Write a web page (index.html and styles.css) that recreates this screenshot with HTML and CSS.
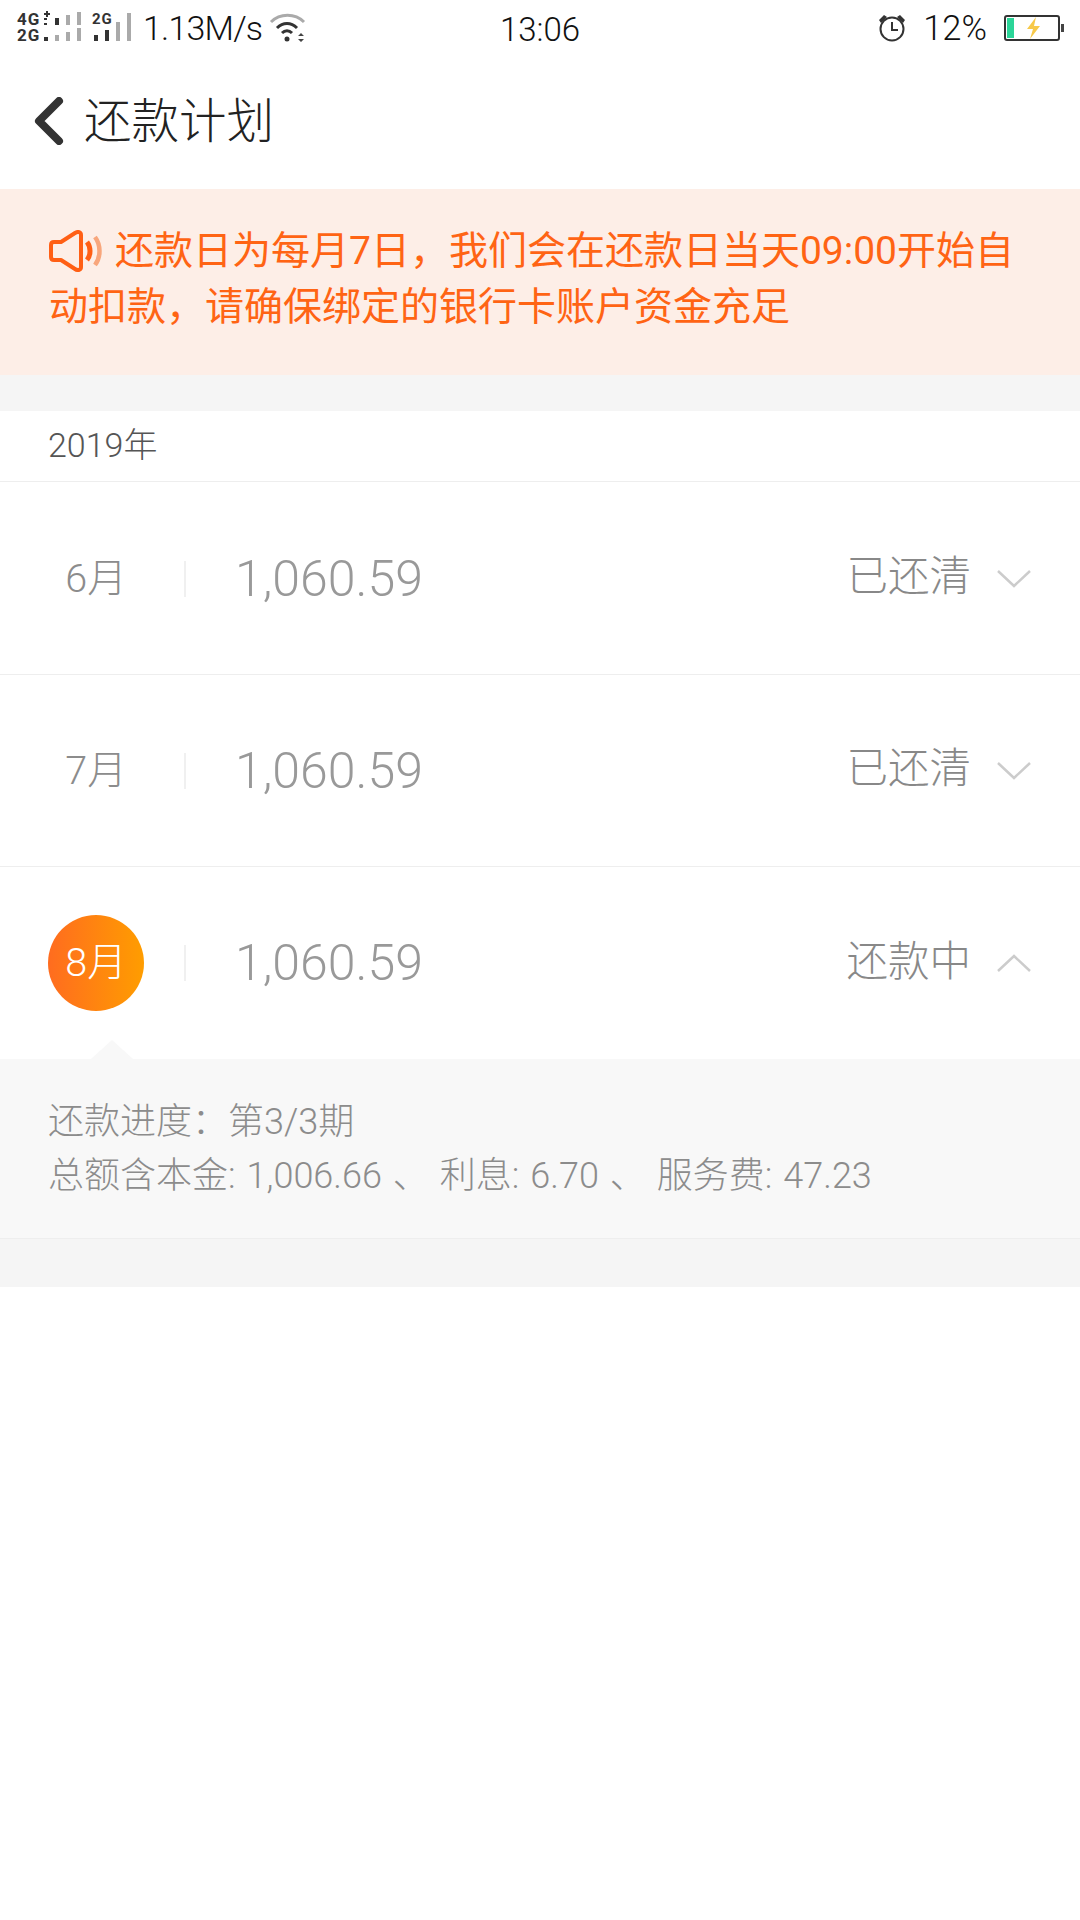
FILE: index.html
```html
<!DOCTYPE html>
<html lang="zh-CN">
<head>
    <meta charset="UTF-8">
    <meta name="viewport" content="width=device-width, initial-scale=1.0">
    <title>还款计划</title>
    <link rel="stylesheet" href="styles.css">
</head>
<body>
    <!-- 状态栏 -->
    <div class="status-bar">
        <div class="status-left">
            <svg width="135" height="56" viewBox="0 0 135 56">
                <text x="17" y="25" class="net-label">4G</text>
                <text x="17" y="41" class="net-label">2G</text>
                <path d="M44 14h6M47 11v6" stroke="#333" stroke-width="2"/>
                <path d="M44 18h3v2h-3zM44 23h3v2h-3z" fill="#333"/>
                <rect x="44" y="37" width="4" height="4" fill="#333"/>
                <rect x="55" y="18" width="4" height="7" fill="#333"/>
                <rect x="55" y="35" width="4" height="6" fill="#aaa"/>
                <rect x="66" y="15" width="4" height="10" fill="#aaa"/>
                <rect x="66" y="32" width="4" height="9" fill="#aaa"/>
                <rect x="77" y="12" width="4" height="13" fill="#aaa"/>
                <rect x="77" y="28" width="4" height="13" fill="#aaa"/>
                <text x="92" y="24" class="net-label-small">2G</text>
                <rect x="94" y="35" width="4" height="6" fill="#333"/>
                <rect x="105" y="30" width="4" height="11" fill="#333"/>
                <rect x="116" y="22" width="4" height="19" fill="#aaa"/>
                <rect x="127" y="13" width="4" height="28" fill="#aaa"/>
            </svg>
            <span class="speed">1.13M/s</span>
            <svg class="wifi" width="38" height="30" viewBox="0 0 38 30" fill="none">
                <path d="M2 9C11 0 26 0 35 9" stroke="#aaa" stroke-width="3"/>
                <path d="M8 15C14 9 22 9 28 15" stroke="#333" stroke-width="3"/>
                <path d="M13 20C16 17 20 17 23 20" stroke="#333" stroke-width="3"/>
                <circle cx="18" cy="26" r="2.500" fill="#333"/>
                <path d="M29 23l3-3 3 3zM29 26l3 3 3-3z" fill="#444"/>
            </svg>
        </div>
        <div class="status-time">13:06</div>
        <div class="status-right">
            <svg width="28" height="28" viewBox="0 0 28 28" fill="none">
                <circle cx="14" cy="15" r="11.500" stroke="#333" stroke-width="2"/>
                <path d="M14 8v8h6" stroke="#333" stroke-width="2"/>
                <path d="M1 6l5-5 3 2-6 6zM27 6l-5-5-3 2 6 6z" fill="#333"/>
            </svg>
            <span class="battery-text">12%</span>
            <svg width="60" height="26" viewBox="0 0 60 26" fill="none">
                <rect x="1" y="1" width="54" height="24" rx="2" stroke="#333" stroke-width="2"/>
                <rect x="3" y="3" width="7" height="20" fill="#2bd598"/>
                <rect x="57" y="9" width="3" height="8" fill="#444"/>
                <path d="M32 2l-9 12h6l-3 10 10-13h-6z" fill="#f7c94a"/>
            </svg>
        </div>
    </div>

    <!-- 标题栏 -->
    <div class="header">
        <svg width="32" height="48" viewBox="0 0 32 48" fill="none">
            <path d="M27 4L7 24l20 20" stroke="#333" stroke-width="8" stroke-linecap="round" stroke-linejoin="round"/>
        </svg>
        <div class="header-title">还款计划</div>
    </div>

    <!-- 提示 -->
    <div class="notice">
        <svg class="notice-icon" width="54" height="42" viewBox="0 0 54 42" fill="none">
            <path d="M2 15c0-2 1-3 3-3h7L26 3c3-2 6-1 6 2v32c0 3-3 4-6 2L12 30H5c-2 0-3-1-3-3z" stroke="#ff5f15" stroke-width="4" stroke-linejoin="round"/>
            <path d="M38 12c4 5 4 13 0 18" stroke="#ff5f15" stroke-width="5"/>
            <path d="M46 7c6 8 6 20 0 28" stroke="#f8a67c" stroke-width="4.500"/>
        </svg>还款日为每月7日，我们会在还款日当天09:00开始自动扣款，请确保绑定的银行卡账户资金充足
    </div>

    <div class="gap"></div>

    <div class="year-row">2019年</div>

    <!-- 每月计划 -->
    <div class="plan-row">
        <div class="plan-month">6月</div>
        <div class="plan-line"></div>
        <div class="plan-amount">1,060.59</div>
        <div class="plan-status">已还清</div>
        <svg class="plan-arrow" width="34" height="20" viewBox="0 0 34 20" fill="none">
            <path d="M1 2l16 15L33 2" stroke="#ccc" stroke-width="2.500"/>
        </svg>
    </div>
    <div class="plan-row">
        <div class="plan-month">7月</div>
        <div class="plan-line"></div>
        <div class="plan-amount">1,060.59</div>
        <div class="plan-status">已还清</div>
        <svg class="plan-arrow" width="34" height="20" viewBox="0 0 34 20" fill="none">
            <path d="M1 2l16 15L33 2" stroke="#ccc" stroke-width="2.500"/>
        </svg>
    </div>
    <div class="plan-row open">
        <div class="plan-month current">8月</div>
        <div class="plan-line"></div>
        <div class="plan-amount">1,060.59</div>
        <div class="plan-status">还款中</div>
        <svg class="plan-arrow" width="34" height="20" viewBox="0 0 34 20" fill="none">
            <path d="M1 18L17 3l16 15" stroke="#ccc" stroke-width="2.500"/>
        </svg>
    </div>

    <div class="detail">
        <div>还款进度：第3/3期</div>
        <div>总额含本金: 1,006.66 、 利息: 6.70 、 服务费: 47.23</div>
    </div>

    <div class="bottom-gap"></div>
</body>
</html>
```

FILE: styles.css
```css
body {
    font-family: "Roboto", "Noto Sans CJK SC", sans-serif;
    margin: 0;
    padding: 0;
    width: 1080px;
    height: 1920px;
    background-color: #fff;
    overflow: hidden;
}
/* 状态栏 */
.status-bar {
    height: 56px;
    display: flex;
    align-items: center;
    justify-content: space-between;
    padding-right: 16px;
    position: relative;
    color: #111;
}
.status-left {
    display: flex;
    align-items: center;
}
.net-label {
    font-size: 17px;
    font-weight: 700;
    letter-spacing: 1px;
    fill: #333;
}
.net-label-small {
    font-size: 15px;
    font-weight: 700;
    letter-spacing: 1px;
    fill: #333;
}
.speed {
    font-size: 34px;
    font-weight: 300;
    letter-spacing: -0.8px;
    margin-left: 8px;
}
.wifi {
    margin-left: 7px;
}
.status-time {
    position: absolute;
    left: 0;
    right: 0;
    top: 10px;
    text-align: center;
    font-size: 33px;
    line-height: 40px;
    font-weight: 300;
}
.status-right {
    display: flex;
    align-items: center;
}
.battery-text {
    font-size: 34.500px;
    font-weight: 300;
    margin: 0 17px 0 17px;
}
/* 标题栏 */
.header {
    height: 133px;
    box-sizing: border-box;
    padding: 0 0 3px 32px;
    display: flex;
    align-items: center;
    gap: 20px;
}
.header-title {
    font-size: 47.500px;
    color: #222;
    font-weight: 300;
    margin-top: -7px;
}
/* 提示 */
.notice {
    height: 186px;
    box-sizing: border-box;
    background-color: #fdeee7;
    color: #ff6414;
    font-size: 39px;
    line-height: 56px;
    padding: 34px 40px 0 49px;
}
.notice-icon {
    vertical-align: -8px;
    margin-right: 12px;
}
.gap {
    height: 36px;
    background-color: #f5f5f5;
}
.year-row {
    height: 70px;
    line-height: 68px;
    padding-left: 48px;
    font-size: 34px;
    font-weight: 300;
    color: #555;
    border-bottom: 1px solid #eee;
    margin-bottom: 1px;
}
/* 每月计划 */
.plan-row {
    height: 192px;
    box-sizing: border-box;
    display: flex;
    align-items: center;
    border-bottom: 1px solid #eee;
    padding: 0 49px 0 48px;
}
.plan-row.open {
    border-bottom: none;
}
.plan-month {
    width: 96px;
    height: 96px;
    line-height: 96px;
    text-align: center;
    font-size: 39.500px;
    font-weight: 300;
    color: #8c8c8c;
}
.plan-month.current {
    border-radius: 50%;
    color: #fff;
    background: linear-gradient(to right, #ff6c1f, #ff9d00);
}
.plan-line {
    width: 2px;
    height: 36px;
    background-color: #f0f0f0;
    margin: 0 49px 0 40px;
}
.plan-amount {
    font-size: 50px;
    color: #999;
    font-weight: 300;
    flex: 1;
}
.plan-status {
    font-size: 41.500px;
    font-weight: 300;
    color: #888;
    line-height: 50px;
    margin-top: -3px;
}
.plan-arrow {
    margin-left: 26px;
}
/* 展开的明细 */
.detail {
    height: 180px;
    box-sizing: border-box;
    background-color: #f8f8f8;
    border-bottom: 1px solid #eee;
    padding: 36px 48px 0;
    font-size: 36px;
    word-spacing: 2.200px;
    font-weight: 300;
    line-height: 54px;
    color: #8c8c8c;
    position: relative;
}
.detail::before {
    content: "";
    position: absolute;
    left: 91px;
    top: -19px;
    border-left: 21px solid transparent;
    border-right: 21px solid transparent;
    border-bottom: 19px solid #f8f8f8;
}
.bottom-gap {
    height: 48px;
    background-color: #f5f5f5;
}
```
